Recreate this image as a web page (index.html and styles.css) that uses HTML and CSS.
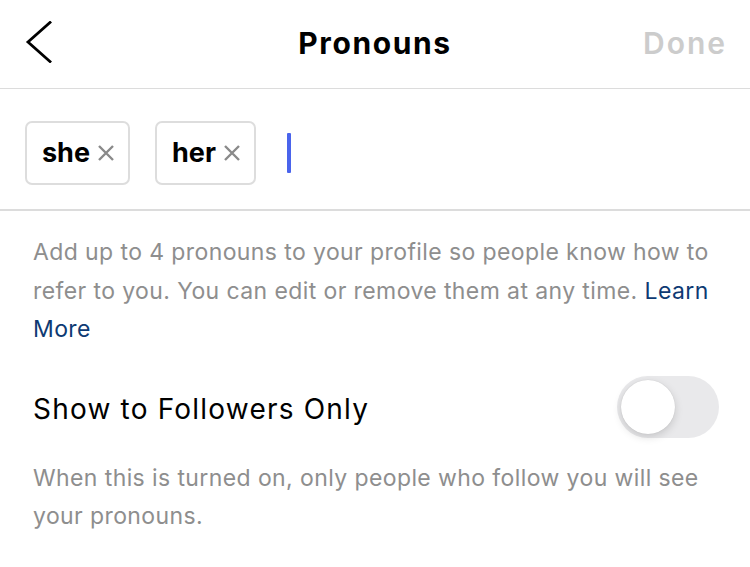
FILE: index.html
```html
<!DOCTYPE html>
<html lang="en">
<head>
  <meta charset="UTF-8" />
  <title>Pronouns</title>
  <meta name="viewport" content="width=device-width, initial-scale=1.0" />
  <link rel="stylesheet" href="styles.css">
</head>
<body>
  <!-- Top bar -->
  <div class="topbar">
    <div class="back">
      <svg width="34" height="42" viewBox="0 0 34 42">
        <path d="M30 1.5 L8 21 L30 40.5" fill="none" stroke="#000" stroke-width="2.8" stroke-linecap="square" />
      </svg>
    </div>
    <div class="title">Pronouns</div>
    <div class="done">Done</div>
  </div>

  <!-- Pronoun chips -->
  <div class="chips">
    <div class="chip">
      <span>she</span>
      <svg class="remove" width="18" height="18" viewBox="0 0 18 18">
        <path d="M2 2 L16 16 M16 2 L2 16" stroke="#8a8a8a" stroke-width="2.4" />
      </svg>
    </div>
    <div class="chip">
      <span>her</span>
      <svg class="remove" width="18" height="18" viewBox="0 0 18 18">
        <path d="M2 2 L16 16 M16 2 L2 16" stroke="#8a8a8a" stroke-width="2.4" />
      </svg>
    </div>
    <div class="cursor"></div>
  </div>

  <div class="content">
    <p class="hint">
      Add up to 4 pronouns to your profile so people know how to refer to you. You can edit or remove them at any time. <a href="#">Learn More</a>
    </p>

    <div class="row">
      <span class="row-label">Show to Followers Only</span>
      <div class="toggle"><div class="knob"></div></div>
    </div>

    <p class="hint">
      When this is turned on, only people who follow you will see your pronouns.
    </p>
  </div>
</body>
</html>
```

FILE: styles.css
```css
* {
  box-sizing: border-box;
}

body {
  margin: 0;
  font-family: Inter, Roboto, "Liberation Sans", sans-serif;
  background-color: #fff;
  color: #000;
  width: 750px;
  height: 567px;
  overflow: hidden;
}

.topbar {
  height: 89px;
  display: flex;
  align-items: center;
  justify-content: space-between;
  padding: 0 25px 2px 20px;
  border-bottom: 1px solid #dcdcdc;
  position: relative;
}

.back {
  width: 34px;
  height: 42px;
  margin-top: -2px;
}

.back svg {
  display: block;
}

.title {
  position: absolute;
  left: 0;
  right: 0;
  text-align: center;
  font-size: 30px;
  font-weight: bold;
  letter-spacing: 1.6px;
  pointer-events: none;
}

.done {
  font-size: 30px;
  font-weight: 600;
  letter-spacing: 2px;
  color: #cccccc;
  margin-right: -2px;
}

.chips {
  height: 122px;
  display: flex;
  align-items: center;
  gap: 25px;
  padding: 7px 0 0 25px;
  border-bottom: 2px solid #dcdcdc;
}

.chip {
  height: 64px;
  padding: 0 13px 0 15px;
  border: 2px solid #dddddd;
  border-radius: 7px;
  display: flex;
  align-items: center;
  gap: 7px;
  font-size: 27px;
  font-weight: bold;
}

.remove {
  display: block;
  margin-top: 1px;
}

.cursor {
  width: 4px;
  height: 40px;
  background-color: #4a64ec;
  border-radius: 1px;
  margin-left: 6px;
}

.content {
  padding: 0 32px 0 33px;
}

.hint {
  margin: 0;
  font-size: 23px;
  letter-spacing: 0.4px;
  line-height: 38.5px;
  color: #8e8e8e;
}

.content > .hint:first-child {
  margin-top: 22px;
}

.hint a {
  color: #0e3a73;
  text-decoration: none;
}

.row {
  display: flex;
  align-items: center;
  justify-content: space-between;
  height: 62px;
  margin: 27px 0 21px;
  font-size: 28px;
  letter-spacing: 1.2px;
}

.row-label {
  margin-top: 4px;
}

.toggle {
  width: 102px;
  height: 62px;
  border-radius: 31px;
  background-color: #e9e9eb;
  padding: 4px;
  margin-right: -1px;
}

.knob {
  width: 54px;
  height: 54px;
  border-radius: 50%;
  background-color: #fff;
  box-shadow: 0 3px 8px rgba(0, 0, 0, 0.15), 0 0 1px rgba(0, 0, 0, 0.16);
}
```
